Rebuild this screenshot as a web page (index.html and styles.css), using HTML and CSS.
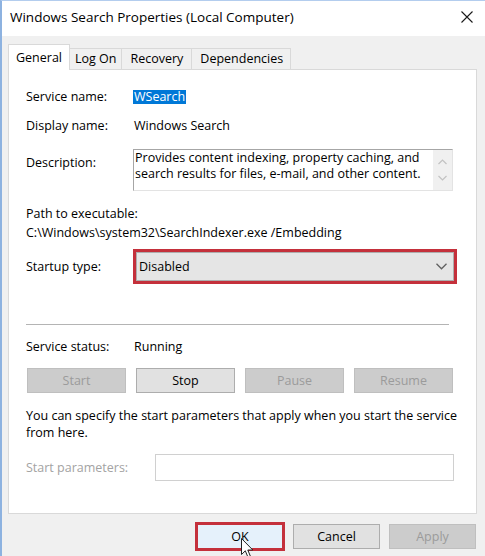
FILE: index.html
```html
<!DOCTYPE html>
<html>
<head>
<meta charset="utf-8">
<title>Windows Search Properties</title>
<link rel="stylesheet" href="styles.css">
</head>
<body>
<div class="window">
  <div class="titlebar">
    <span class="title">Windows Search Properties (Local Computer)</span>
    <svg class="close" width="12" height="12" viewBox="0 0 12 12"><path d="M0.5 0.5 L11.5 11.5 M11.5 0.5 L0.5 11.5" stroke="#1a1a1a" stroke-width="1.1" fill="none"/></svg>
  </div>
  <div class="tabs">
    <div class="tab active">General</div>
    <div class="tab">Log On</div>
    <div class="tab tab-recovery">Recovery</div>
    <div class="tab tab-deps">Dependencies</div>
  </div>
  <div class="panel">
    <div class="row">
      <span class="label">Service name:</span>
      <span class="value"><span class="sel">WSearch</span></span>
    </div>
    <div class="row row-display">
      <span class="label">Display name:</span>
      <span class="value">Windows Search</span>
    </div>
    <div class="row row-desc">
      <span class="label label-desc">Description:</span>
      <div class="textbox">
        <div class="textbox-text">Provides content indexing, property caching, and<br>search results for files, e-mail, and other content.</div>
        <div class="scrollbar">
          <svg width="9" height="6" viewBox="0 0 9 6"><path d="M0.5 5 L4.5 1 L8.5 5" stroke="#c2c2c2" stroke-width="1.2" fill="none"/></svg>
          <svg width="9" height="6" viewBox="0 0 9 6"><path d="M0.5 1 L4.5 5 L8.5 1" stroke="#c2c2c2" stroke-width="1.2" fill="none"/></svg>
        </div>
      </div>
    </div>
    <div class="path-label">Path to executable:</div>
    <div class="path-value">C:\Windows\system32\SearchIndexer.exe /Embedding</div>
    <div class="row row-startup">
      <span class="label">Startup type:</span>
      <div class="combo">
        <span>Disabled</span>
        <svg width="11" height="7" viewBox="0 0 11 7"><path d="M0.5 0.8 L5.5 5.8 L10.5 0.8" stroke="#606060" stroke-width="1.3" fill="none"/></svg>
      </div>
    </div>
    <div class="separator"></div>
    <div class="row row-status">
      <span class="label">Service status:</span>
      <span class="value">Running</span>
    </div>
    <div class="svc-buttons">
      <div class="btn disabled">Start</div>
      <div class="btn">Stop</div>
      <div class="btn disabled">Pause</div>
      <div class="btn disabled">Resume</div>
    </div>
    <p class="hint">You can specify the start parameters that apply when you start the service<br>from here.</p>
    <div class="row row-params">
      <span class="label label-disabled">Start parameters:</span>
      <div class="input"></div>
    </div>
  </div>
  <div class="footer">
    <div class="btn dlg ok">OK</div>
    <div class="btn dlg">Cancel</div>
    <div class="btn dlg disabled">Apply</div>
  </div>
  <svg class="cursor" width="13" height="21" viewBox="0 0 13 21"><path d="M0.5 0.5 L0.5 16.5 L4.3 12.8 L7 19.3 L9.4 18.3 L6.8 12 L11.8 12 Z" fill="#fff" stroke="#222" stroke-width="1"/></svg>
</div>
</body>
</html>
```
FILE: styles.css
```css
* { box-sizing: border-box; margin: 0; padding: 0; }
html, body { width: 485px; height: 556px; overflow: hidden; }
body {
  font-family: "Open Sans", "Noto Sans", sans-serif;
  font-size: 12.5px;
  color: #000;
  background: #f0f0f0;
}
.window {
  position: relative;
  width: 485px;
  height: 556px;
  border-left: 2px solid #8db2e0;
  border-top: 1px solid #b3cdee;
  background: #f0f0f0;
  display: flex;
  flex-direction: column;
}
.titlebar {
  height: 35px;
  background: #fff;
  display: flex;
  align-items: center;
  justify-content: space-between;
  padding: 0 12px 3px 8px;
}
.title { font-size: 13.5px; color: #000; }
.close { display: block; }

.tabs {
  display: flex;
  align-items: flex-end;
  height: 26px;
  margin: 8px 0 0 6px;
  position: relative;
  z-index: 1;
}
.tab {
  height: 21px;
  line-height: 20px;
  padding: 0 5px;
  border: 1px solid #d9d9d9;
  border-bottom: none;
  background: #f0f0f0;
  margin-left: -1px;
  margin-bottom: 1px;
}
.tab.tab-recovery { padding: 0 8px; }
.tab.tab-deps { padding: 0 7px 0 8px; }
.tab.active {
  height: 26px;
  line-height: 25px;
  padding: 0 7px;
  background: #fff;
  margin-left: 0;
  margin-bottom: 0;
}

.panel {
  margin: -1px 8px 0 6px;
  background: #fff;
  border: 1px solid #d9d9d9;
  padding: 19px 22px 32px 17px;
}
.row {
  display: grid;
  grid-template-columns: 108px 1fr;
  line-height: 16px;
}
.row-display { margin-top: 13px; }
.row-desc { margin-top: 15px; align-items: start; }
.label-desc { padding-top: 6px; }
.sel {
  display: inline-block;
  background: #0078d7;
  color: #fff;
  line-height: 14px;
  margin: 1px 0 0 -1px;
  padding: 0 1px;
}
.textbox {
  margin-left: -1px;
  width: 320px;
  height: 42px;
  border: 1px solid #e3e3e3;
  border-top-color: #a6a6a6;
  border-left-color: #a6a6a6;
  display: flex;
}
.textbox-text {
  flex: 1;
  padding-left: 1px;
  line-height: 16px;
  white-space: nowrap;
}
.scrollbar {
  width: 19px;
  background: #f0f0f0;
  display: flex;
  flex-direction: column;
  align-items: center;
  justify-content: space-between;
  padding: 9px 0 9px;
}
.path-label { margin-top: 15px; line-height: 16px; }
.path-value { margin-top: 3px; line-height: 16px; }
.row-startup { margin-top: 11px; align-items: center; }
.combo {
  margin-left: 2px;
  width: 318px;
  height: 29px;
  background: #e5e5e5;
  border: 1px solid #adadad;
  outline: 3px solid #c4303b;
  display: flex;
  align-items: center;
  justify-content: space-between;
  padding: 0 6px 0 2px;
}
.separator {
  margin: 43px 5px 0 0;
  height: 1px;
  background: #b4b4b4;
}
.row-status { margin-top: 14px; }
.svc-buttons {
  margin: 13px 1px 0 1px;
  display: grid;
  grid-template-columns: repeat(4, 1fr);
  gap: 10px;
}
.btn {
  height: 25px;
  display: flex;
  align-items: center;
  justify-content: center;
  background: #e1e1e1;
  border: 1px solid #adadad;
  color: #000;
}
.btn.disabled {
  background: #cccccc;
  border-color: #bfbfbf;
  color: #9b9b9b;
}
.hint {
  margin-top: 14px;
  line-height: 17px;
  white-space: nowrap;
}
.row-params {
  margin-top: 13px;
  grid-template-columns: 129px 1fr;
  align-items: center;
}
.label-disabled { color: #a3a3a3; }
.input {
  height: 27px;
  background: #fff;
  border: 1px solid #d0d0d0;
}

.footer {
  display: flex;
  justify-content: flex-end;
  align-items: flex-start;
  gap: 9px;
  padding: 10px 9px 0 0;
}
.btn.dlg { width: 87px; }
.btn.ok {
  width: 90px;
  height: 29px;
  margin-top: -2px;
  margin-right: -1px;
  border: 3px solid #c4303b;
  background: #e5f1fb;
}
.cursor {
  position: absolute;
  left: 239px;
  top: 537px;
}
```
